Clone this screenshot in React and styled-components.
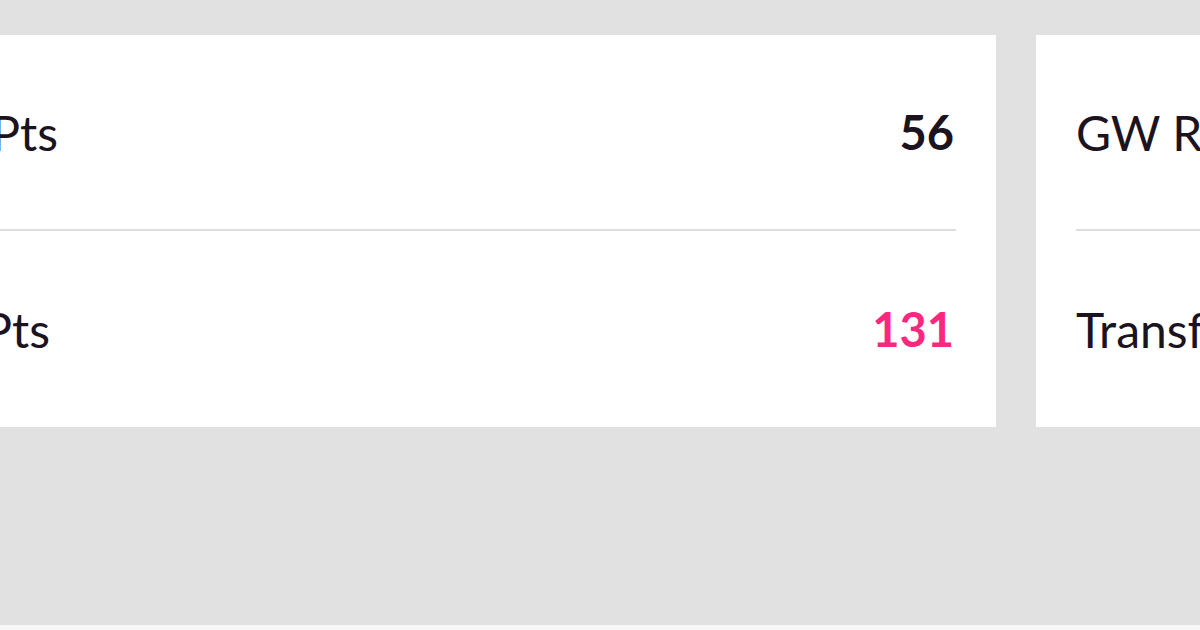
import styled, { createGlobalStyle } from "styled-components"

const GlobalStyle = createGlobalStyle`
    body {
        margin: 0;
        background-color: #f7f7f7;
        font-family: Lato, "Liberation Sans", sans-serif;
        overflow: hidden;
    }
`

const cards = [
    {
        id: "points",
        width: 1228,
        rows: [
            { label: "Average Pts", value: "56" },
            { label: "Highest Pts", value: "131", highlight: true },
        ],
    },
    {
        id: "rank",
        width: 600,
        rows: [
            { label: "GW Rank", value: "1,204,553" },
            { label: "Transfers", value: "1" },
        ],
    },
]

function App() {
    return (
        <>
            <GlobalStyle />
            <DivPage>
                <DivCardRow>
                    {cards.map((card) => (
                        <DivCard key={card.id} $width={card.width}>
                            {card.rows.map((row) => (
                                <DivStatRow key={row.label}>
                                    <SpanLabel>{row.label}</SpanLabel>
                                    <SpanValue $highlight={row.highlight}>{row.value}</SpanValue>
                                </DivStatRow>
                            ))}
                        </DivCard>
                    ))}
                </DivCardRow>
            </DivPage>
        </>
    )
}

const DivPage = styled.div`
    background-color: #e1e1e1;
    height: 625px;
    padding-top: 35px;
    box-sizing: border-box;
    overflow: hidden;
`

const DivCardRow = styled.div`
    display: flex;
    gap: 40px;
    margin-left: -232px;
`

const DivCard = styled.div`
    flex: 0 0 ${(p) => p.$width}px;
    background-color: #ffffff;
    padding: 0 40px;
    box-sizing: border-box;
`

const DivStatRow = styled.div`
    display: flex;
    align-items: center;
    justify-content: space-between;
    height: 196px;
    box-sizing: border-box;
    border-bottom: 2px solid #dedede;

    &:last-child {
        border-bottom: none;
    }
`

const SpanLabel = styled.span`
    font-size: 48px;
    font-weight: 400;
    color: #1c1320;
    white-space: nowrap;
`

const SpanValue = styled.span`
    font-size: 47px;
    font-weight: 700;
    margin-right: 2px;
    color: ${(p) => (p.$highlight ? "#fc2880" : "#1c1320")};
    white-space: nowrap;
`

export default App
